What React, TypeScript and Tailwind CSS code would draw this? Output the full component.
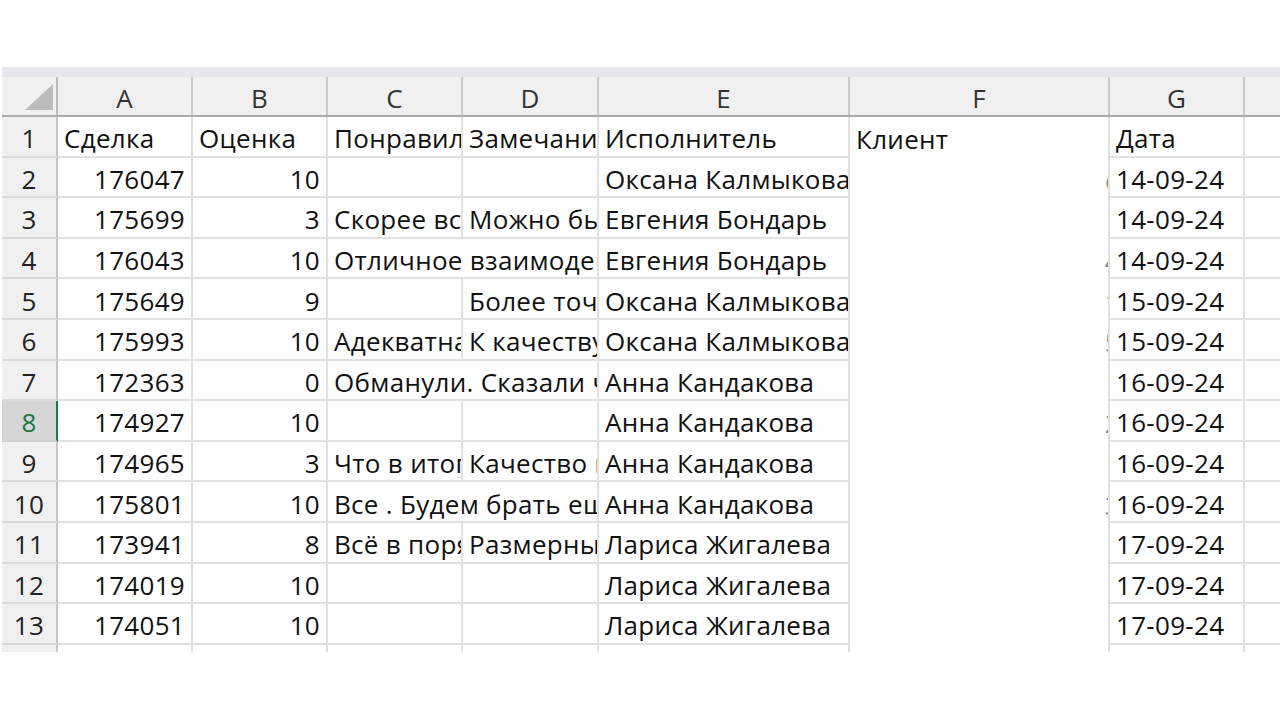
import React from "react";

const FONT = "font-['Open_Sans',sans-serif] text-[26px] tracking-[0.3px]";

const A = "w-[135px]";
const B = "w-[135px]";
const C = "w-[135px]";
const D = "w-[136px]";
const CD = "w-[271px]";
const E = "w-[251px]";
const F = "w-[260px]";
const G = "w-[135px]";

type RowData = {
  n: number;
  a: string;
  b: string;
  c?: string;
  d?: string;
  cd?: string;
  e: string;
  f?: string;
  frag?: string;
  g: string;
  numeric?: boolean;
};

const rows: RowData[] = [
  { n: 1, a: "Сделка", b: "Оценка", c: "Понравилось", d: "Замечания", e: "Исполнитель", f: "Клиент", g: "Дата" },
  { n: 2, a: "176047", b: "10", e: "Оксана Калмыкова", frag: "е", g: "14-09-24", numeric: true },
  { n: 3, a: "175699", b: "3", c: "Скорее всего", d: "Можно было", e: "Евгения Бондарь", frag: "-", g: "14-09-24", numeric: true },
  { n: 4, a: "176043", b: "10", cd: "Отличное взаимодействие", e: "Евгения Бондарь", frag: "4", g: "14-09-24", numeric: true },
  { n: 5, a: "175649", b: "9", d: "Более точно", e: "Оксана Калмыкова", frag: "1", g: "15-09-24", numeric: true },
  { n: 6, a: "175993", b: "10", c: "Адекватная", d: "К качеству", e: "Оксана Калмыкова", frag: "5", g: "15-09-24", numeric: true },
  { n: 7, a: "172363", b: "0", cd: "Обманули. Сказали что", e: "Анна Кандакова", g: "16-09-24", numeric: true },
  { n: 8, a: "174927", b: "10", e: "Анна Кандакова", frag: "2", g: "16-09-24", numeric: true },
  { n: 9, a: "174965", b: "3", c: "Что в итоге", d: "Качество не", e: "Анна Кандакова", g: "16-09-24", numeric: true },
  { n: 10, a: "175801", b: "10", cd: "Все . Будем брать ещё", e: "Анна Кандакова", frag: "3", g: "16-09-24", numeric: true },
  { n: 11, a: "173941", b: "8", c: "Всё в порядке", d: "Размерный", e: "Лариса Жигалева", frag: "·", g: "17-09-24", numeric: true },
  { n: 12, a: "174019", b: "10", e: "Лариса Жигалева", g: "17-09-24", numeric: true },
  { n: 13, a: "174051", b: "10", e: "Лариса Жигалева", g: "17-09-24", numeric: true },
];

function DataCell({ w, text, right }: { w: string; text?: string; right?: boolean }) {
  return (
    <div
      className={`${w} shrink-0 h-full border-r-2 border-b-2 border-[#e1e1e1] overflow-hidden whitespace-nowrap flex items-center pt-[4px] px-[6px] ${
        right ? "justify-end" : "justify-start"
      }`}
    >
      {text && <span className="leading-none text-[#111]">{text}</span>}
    </div>
  );
}

function FCell({ text, frag }: { text?: string; frag?: string }) {
  return (
    <div className={`${F} shrink-0 h-full border-r-2 border-[#e1e1e1] bg-white overflow-hidden whitespace-nowrap flex items-center pt-[4px] px-[6px] justify-between`}>
      <span className="leading-none text-[#111]">{text ?? ""}</span>
      {frag && <span className="leading-none text-[#888] mr-[-18px]">{frag}</span>}
    </div>
  );
}

function Row({ r }: { r: RowData }) {
  const selected = r.n === 8;
  return (
    <div className="flex h-[40.6px] shrink-0">
      <div
        className={`w-[56px] shrink-0 h-full border-b-2 border-r-2 flex items-center justify-center pt-[4px] ${
          selected
            ? "bg-[#d6d6d6] border-b-[#cfcfcf] border-r-[#217346] text-[#217346]"
            : "bg-[#f0f0f0] border-b-[#dadada] border-r-[#c6c6c6] text-[#222]"
        }`}
      >
        <span className="leading-none">{r.n}</span>
      </div>
      <DataCell w={A} text={r.a} right={r.numeric} />
      <DataCell w={B} text={r.b} right={r.numeric} />
      {r.cd ? (
        <DataCell w={CD} text={r.cd} />
      ) : (
        <>
          <DataCell w={C} text={r.c} />
          <DataCell w={D} text={r.d} />
        </>
      )}
      <DataCell w={E} text={r.e} />
      <FCell text={r.f} frag={r.frag} />
      <DataCell w={G} text={r.g} />
      <div className="flex-1 h-full border-b-2 border-[#e1e1e1]" />
    </div>
  );
}

function HeaderCell({ w, label }: { w: string; label: string }) {
  return (
    <div className={`${w} shrink-0 h-full border-r-2 border-[#cacaca] flex items-center justify-center pt-[3px] text-[#333]`}>
      <span className="leading-none">{label}</span>
    </div>
  );
}

export default function App() {
  return (
    <div className={`w-[1280px] h-[720px] bg-white overflow-hidden ${FONT}`}>
      <div className="mt-[67px] ml-[2px] h-[585px] overflow-hidden flex flex-col">
        <div className="h-[10px] shrink-0 bg-[#e6e6ee]" />
        <div className="flex h-[40px] shrink-0 bg-[#f0f0f0] border-b-2 border-[#ababab]">
          <div className="w-[56px] shrink-0 h-full border-r-2 border-[#bdbdbd] relative">
            <svg className="absolute left-[23px] top-[7px]" width="28" height="26" viewBox="0 0 28 26">
              <polygon points="28,0 28,26 0,26" fill="#bcbcbc" />
            </svg>
          </div>
          <HeaderCell w={A} label="A" />
          <HeaderCell w={B} label="B" />
          <HeaderCell w={C} label="C" />
          <HeaderCell w={D} label="D" />
          <HeaderCell w={E} label="E" />
          <HeaderCell w={F} label="F" />
          <HeaderCell w={G} label="G" />
          <div className="flex-1 h-full" />
        </div>
        {rows.map((r) => (
          <Row key={r.n} r={r} />
        ))}
        <div className="flex h-[40px] shrink-0">
          <div className="w-[56px] shrink-0 h-full bg-[#f0f0f0] border-r-2 border-[#c6c6c6]" />
          <div className={`${A} shrink-0 h-full border-r-2 border-[#e1e1e1]`} />
          <div className={`${B} shrink-0 h-full border-r-2 border-[#e1e1e1]`} />
          <div className={`${C} shrink-0 h-full border-r-2 border-[#e1e1e1]`} />
          <div className={`${D} shrink-0 h-full border-r-2 border-[#e1e1e1]`} />
          <div className={`${E} shrink-0 h-full border-r-2 border-[#e1e1e1]`} />
          <div className={`${F} shrink-0 h-full border-r-2 border-[#e1e1e1]`} />
          <div className={`${G} shrink-0 h-full border-r-2 border-[#e1e1e1]`} />
        </div>
      </div>
    </div>
  );
}
